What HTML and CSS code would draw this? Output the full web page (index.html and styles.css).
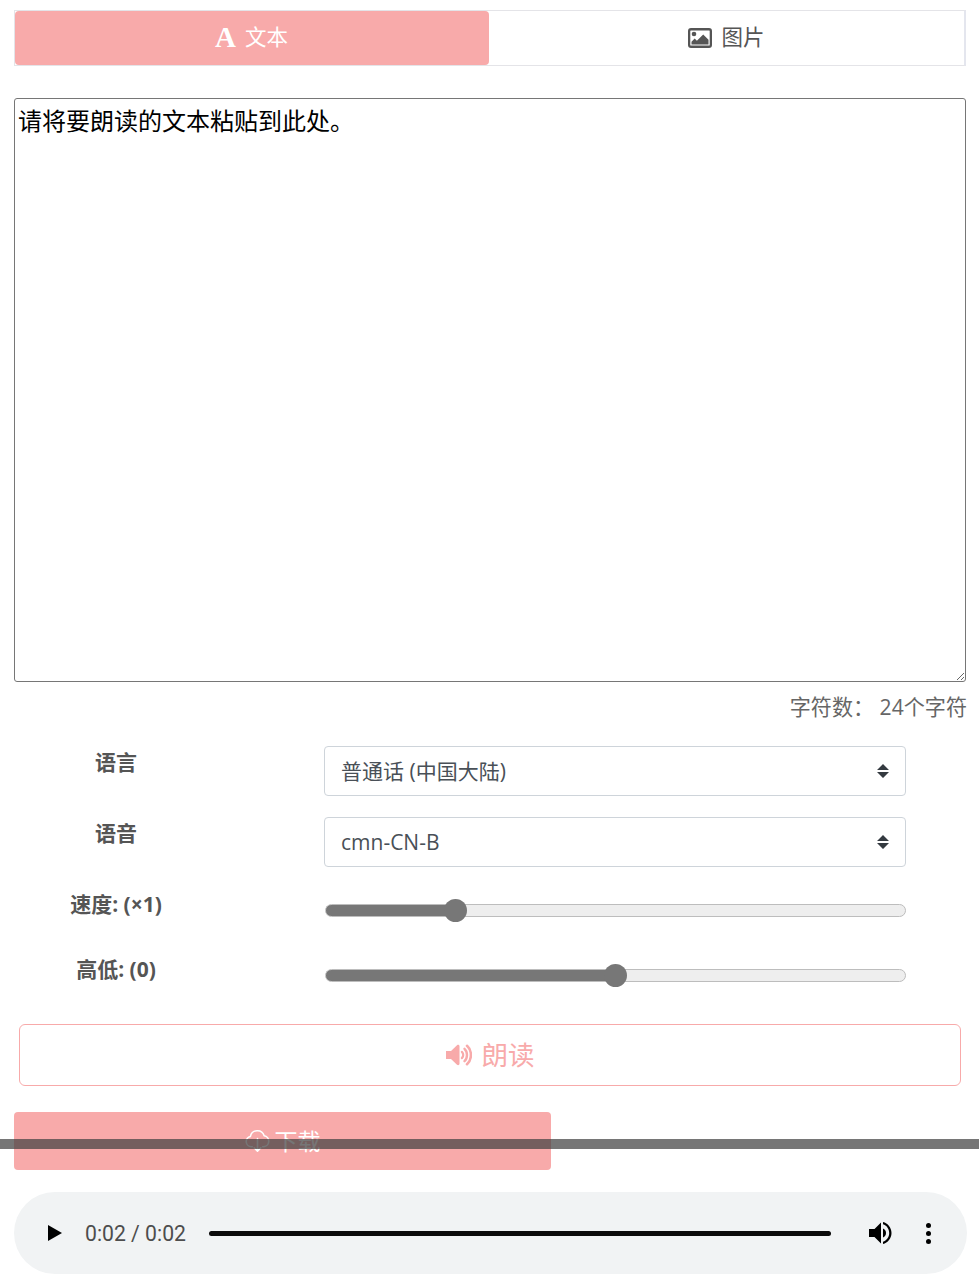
FILE: index.html
```html
<!DOCTYPE html>
<html lang="zh-CN">
<head>
<meta charset="utf-8">
<title>文本朗读</title>
<link rel="stylesheet" href="styles.css">
</head>
<body>
<main class="page">
  <nav class="tabs">
    <a class="tab tab-active"><span class="icon-font">A</span><span>文本</span></a>
    <a class="tab">
      <svg class="icon-image" viewBox="0 0 24 20" aria-hidden="true"><path fill="#555" fill-rule="evenodd" d="M3 0h18a3 3 0 0 1 3 3v14a3 3 0 0 1-3 3H3a3 3 0 0 1-3-3V3a3 3 0 0 1 3-3zm-.2 2.500a.5.5 0 0 0-.5.5v14a.5.5 0 0 0 .5.5h18.400a.5.5 0 0 0 .5-.5V3a.5.5 0 0 0-.5-.5H2.800z"/><circle fill="#555" cx="6" cy="6" r="2.300"/><path fill="#555" d="M3.500 16.500v-2.700l3.200-3.200 2.200 2.200 6.300-6.400 5.300 5.300v4.800z"/></svg>
      <span>图片</span>
    </a>
  </nav>

  <textarea class="text-input">请将要朗读的文本粘贴到此处。</textarea>
  <p class="count">字符数： 24个字符</p>

  <form class="settings">
    <label class="set-label">语言</label>
    <select class="set-select"><option>普通话 (中国大陆)</option></select>
    <label class="set-label">语音</label>
    <select class="set-select"><option>cmn-CN-B</option></select>
    <label class="set-label set-label-range">速度: (×1)</label>
    <input class="slider" type="range" min="0" max="1000" value="212" style="--fill:130px">
    <label class="set-label set-label-range">高低: (0)</label>
    <input class="slider" type="range" min="0" max="1000" value="500" style="--fill:290px">
  </form>

  <button class="btn-speak" type="button">
    <svg class="icon-speaker" viewBox="0 0 26 22" aria-hidden="true"><path fill="#f8aaaa" d="M0 7h5L11 1.200c1-.9 2.500-.4 2.500 1v17.600c0 1.400-1.500 1.900-2.500 1L5 15H0z"/><g fill="none" stroke="#f8aaaa" stroke-linecap="round"><path stroke-width="2.400" d="M16 8c1.500 1.600 1.500 4.400 0 6"/><path stroke-width="2.400" d="M18.500 4.800c3.300 3 3.300 9.400 0 12.400"/><path stroke-width="2.600" d="M21 1.800c5.200 4.600 5.200 13.800 0 18.400"/></g></svg>
    <span>朗读</span>
  </button>

  <button class="btn-download" type="button">
    <svg class="icon-cloud" viewBox="0 0 24 24" aria-hidden="true"><path fill="none" stroke="#fff" stroke-width="1.500" stroke-linecap="round" stroke-linejoin="round" d="M7 18H6a5 5 0 0 1-.8-9.900 6.800 6.800 0 0 1 13.200-.6A5.300 5.300 0 0 1 18 18h-1M12 10v12M8.800 19l3.200 3.200 3.200-3.200"/></svg>
    <span>下载</span>
  </button>

  <div class="player">
    <svg class="p-play" viewBox="0 0 14 16" aria-hidden="true"><path fill="#000" d="M0 0l14 8-14 8z"/></svg>
    <span class="p-time">0:02 / 0:02</span>
    <div class="p-track"></div>
    <svg class="p-volume" viewBox="0 0 24 24" aria-hidden="true"><path fill="#000" d="M0 8h5.500L12 1.500v21L5.500 16H0z"/><path fill="#000" d="M14 7.500c1.800.8 3 2.500 3 4.500s-1.200 3.700-3 4.500z"/><path fill="#000" d="M14 1c4.800 1 8.500 5.700 8.500 11S18.800 22 14 23v-2.300c3.500-1 6.200-4.600 6.200-8.700S17.500 4.300 14 3.300z"/></svg>
    <div class="p-more"><i></i><i></i><i></i></div>
  </div>
</main>
<div class="overlay-bar"></div>
</body>
</html>
```
FILE: styles.css
```css
* { box-sizing: border-box; }
html, body { margin: 0; padding: 0; background: #fff; }
body {
  font-family: "Open Sans", "Noto Sans CJK SC", sans-serif;
  color: #555;
  height: 1287px;
  overflow: hidden;
  position: relative;
}
.page { padding: 10px 12px 0 14px; }

.tabs {
  display: flex;
  height: 56px;
  width: 952px;
  border: 1px solid #e4e4e8;
  border-right: 2px solid #e4e6ee;
}
.tab {
  flex: 1 1 0;
  display: flex;
  align-items: center;
  justify-content: center;
  gap: 9px;
  padding-bottom: 1px;
  font-size: 21.500px;
  color: #555;
}
.tab span:last-child { margin-top: -4px; }
.tab-active {
  flex: 0 0 474px;
  padding-left: 3px;
  background: #f8aaaa;
  color: #fff;
  border-radius: 4px;
}
.icon-font {
  margin-left: -4px;
  font-family: "Liberation Serif", serif;
  font-weight: 700;
  font-size: 29px;
  line-height: 1;
}
.icon-image { width: 24px; height: 20px; }

.text-input {
  display: block;
  width: 952px;
  height: 584px;
  margin: 32px 0 0;
  padding: 5px 3px 2px;
  border: 1px solid #767676;
  border-radius: 3px;
  font-family: "Noto Sans CJK SC", sans-serif;
  font-size: 24px;
  line-height: 1.3;
  color: #000;
  background: #fff;
}
.count {
  width: 953px;
  margin: 10px 0 0;
  text-align: right;
  font-size: 21.100px;
  line-height: 30px;
  color: #666;
}

.settings {
  display: grid;
  grid-template-columns: 204px 582px;
  column-gap: 106px;
  grid-template-rows: 50px 50px 44px 44px;
  row-gap: 21px;
  margin-top: 24px;
}
.set-label {
  text-align: center;
  font-size: 21px;
  font-weight: 700;
  line-height: 32px;
  color: #555;
}
.set-label-range { margin-top: 1px; line-height: 30px; }
.set-select {
  appearance: none;
  width: 582px;
  height: 50px;
  padding: 0 40px 0 16px;
  border: 1px solid #ced4da;
  border-radius: 4px;
  font-family: "Open Sans", "Noto Sans CJK SC", sans-serif;
  font-size: 21px;
  color: #495057;
  background: #fff url("data:image/svg+xml,%3Csvg xmlns='http://www.w3.org/2000/svg' width='12' height='16'%3E%3Cpath fill='%23343a40' d='M6 1l6 6H0zM6 15L0 9h12z'/%3E%3C/svg%3E") no-repeat right 16px center;
}
.slider {
  --fill: 50%;
  appearance: none;
  -webkit-appearance: none;
  display: block;
  width: 581px;
  height: 24px;
  margin: 0 0 0 1px;
  padding: 0;
  background: transparent;
  align-self: center;
}
.slider::-webkit-slider-runnable-track {
  height: 13px;
  border: 1px solid #bdbdbd;
  border-radius: 6.500px;
  background: linear-gradient(#777, #777) no-repeat left center / var(--fill) 100%, #eee;
}
.slider::-webkit-slider-thumb {
  -webkit-appearance: none;
  width: 23px;
  height: 23px;
  margin-top: -6px;
  border-radius: 50%;
  background: #777;
  border: 0;
}

.btn-speak {
  display: flex;
  align-items: center;
  justify-content: center;
  gap: 10px;
  width: 942px;
  height: 62px;
  margin: 27px 0 0 5px;
  padding: 0;
  background: #fff;
  border: 1px solid #f8aaaa;
  border-radius: 6px;
  color: #f8aaaa;
  font-family: "Open Sans", "Noto Sans CJK SC", sans-serif;
  font-size: 26.500px;
}
.btn-speak span { margin-top: -4px; }
.icon-speaker { width: 26px; height: 22px; }

.btn-download {
  display: flex;
  align-items: center;
  justify-content: center;
  gap: 5px;
  width: 537px;
  height: 58px;
  margin: 26px 0 0;
  background: #f8aaaa;
  border: 0;
  border-radius: 4px;
  color: #fff;
  font-family: "Open Sans", "Noto Sans CJK SC", sans-serif;
  font-size: 23px;
}
.btn-download span { margin-top: -2px; }
.icon-cloud { width: 25px; height: 25px; margin-top: -2px; }

.player {
  display: flex;
  align-items: center;
  width: 953px;
  height: 82px;
  margin-top: 22px;
  padding: 0 36.500px 0 34px;
  border-radius: 41px;
  background: #f1f3f4;
  color: #4d4d4d;
}
.p-play { width: 14px; height: 16px; flex: none; }
.p-time {
  margin-left: 23px;
  font-family: Roboto, sans-serif;
  font-size: 21.200px;
  white-space: nowrap;
}
.p-track {
  flex: 1;
  height: 5px;
  margin: 0 0 0 23px;
  border-radius: 3px;
  background: #0b0b0b;
}
.p-volume { width: 24px; height: 24px; margin-left: 38px; flex: none; }
.p-more {
  display: flex;
  flex-direction: column;
  gap: 3px;
  margin-left: 32.500px;
  flex: none;
}
.p-more i {
  display: block;
  width: 5px;
  height: 5px;
  border-radius: 50%;
  background: #000;
}

.overlay-bar {
  position: absolute;
  left: 0;
  top: 1139px;
  width: 100%;
  height: 10px;
  background: rgba(65, 65, 65, 0.72);
}
```
